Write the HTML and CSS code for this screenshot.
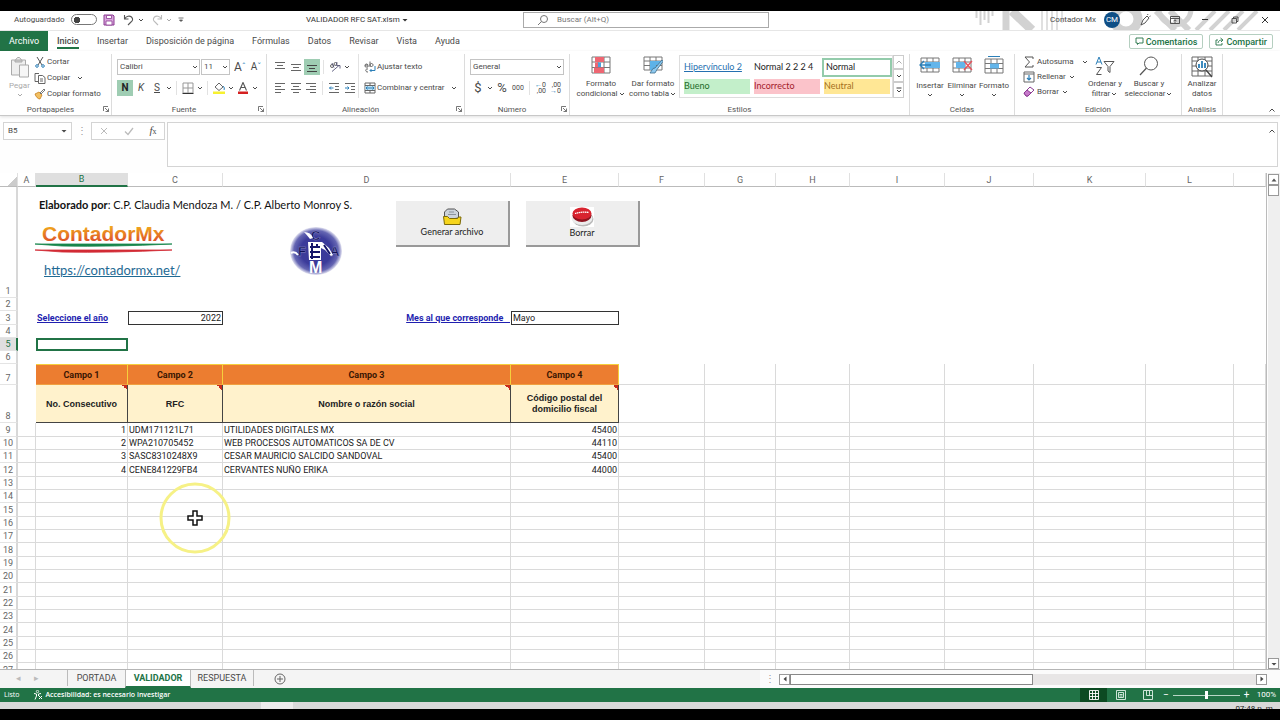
FILE: index.html
```
<!DOCTYPE html>
<html lang="es">
<head>
    <meta charset="UTF-8">
    <meta name="viewport" content="width=device-width, initial-scale=1.0">
    <title>VALIDADOR RFC SAT.xlsm</title>
    <link rel="stylesheet" href="styles.css">
</head>
<body>

    <!-- Símbolos repetidos -->
    <svg class="simbolos">
        <symbol id="chev" viewBox="0 0 8 8"><path d="M2 3l2 2 2-2" fill="none" stroke="currentColor"/></symbol>
        <symbol id="chev-up" viewBox="0 0 8 8"><path d="M1.500 5.500l2.500-2.500 2.500 2.500" fill="none" stroke="currentColor"/></symbol>
        <symbol id="flecha" viewBox="0 0 8 8"><path d="M1.500 3h5L4 5.500z" fill="currentColor"/></symbol>
        <symbol id="lanzar" viewBox="0 0 8 8"><path d="M1.500 6V1.500H6M3 3l3.500 3.500M6.500 3.500v3h-3" fill="none" stroke="currentColor" stroke-width=".8"/></symbol>
    </svg>

    <!-- Barra de título -->
    <header class="titulo">
        <svg class="adorno" viewBox="0 0 300 19">
            <g stroke="#d2d2d2" fill="none">
                <path d="M6.500 0v7M10.500 0v14M14.500 0v9M18.500 0v12M22.500 0v5" stroke-width="2"/>
                <path d="M36 0v19" stroke-width="7"/>
                <path d="M42 0l20 19" stroke-width="9"/>
                <path d="M72 0v19M77 0v19M82 0v19M87 0v19M92 0v12" stroke="#e0e0e0" stroke-width="2"/>
                <circle cx="156" cy="8" r="12" stroke-width="9"/>
                <path d="M186 0l19 19M200 0l19 19" stroke-width="6"/>
                <circle cx="205" cy="-2" r="16" stroke-width="5"/>
                <path d="M226 19l19-19M240 19l19-19M254 19l19-19M268 19l19-19" stroke-width="4"/>
            </g>
        </svg>
        <div class="titulo-izq">
            <label for="auto">Autoguardado</label>
            <input type="checkbox" id="auto" class="switch">
            <button class="ib" aria-label="Guardar"><svg width="12" height="12" viewBox="0 0 12 12"><path d="M1 1h9l1 1v9H1z" fill="#d9a5dc" stroke="#8b3a92"/><path d="M3.500 1.500h5v3h-5zM3 7h6v4H3z" fill="#fff" stroke="#8b3a92" stroke-width=".8"/></svg></button>
            <button class="ib" aria-label="Deshacer"><svg width="12" height="12" viewBox="0 0 12 12"><path d="M1.500 1v4h4M1.500 5c2-3 5-3.500 7-2 2 2 1 4-.5 5L5 11" fill="none" stroke="#555" stroke-width="1.100"/></svg></button>
            <svg class="ch"><use href="#chev"/></svg>
            <button class="ib gris" aria-label="Rehacer"><svg width="12" height="12" viewBox="0 0 12 12"><path d="M10.500 1v4h-4M10.500 5c-2-3-5-3.500-7-2-2 2-1 4 .5 5L7 11" fill="none" stroke="#bbb" stroke-width="1.100"/></svg></button>
            <svg class="ch gris"><use href="#chev"/></svg>
            <svg class="ch mas" viewBox="0 0 8 8"><path d="M1.500 2h5M2.500 4h3L4 5.500z" fill="#555" stroke="#555" stroke-width=".8"/></svg>
        </div>
        <div class="archivo-nombre">VALIDADOR RFC SAT.xlsm <svg class="ch"><use href="#flecha"/></svg></div>
        <div class="buscar">
            <svg width="12" height="12" viewBox="0 0 12 12"><circle cx="7" cy="5" r="3.500" fill="none" stroke="#777"/><path d="M4.500 7.500L1 11" stroke="#777"/></svg>
            <input type="text" aria-label="Buscar" placeholder="Buscar (Alt+Q)">
        </div>
        <div class="titulo-der">
            <span>Contador Mx</span>
            <span class="avatar">CM</span>
            <button class="win" aria-label="Dibujo"><svg width="12" height="12" viewBox="0 0 12 12"><path d="M2 11l2-5 4-4 2 2-4 5zM8.500 1l.5-1M10.500 2.500l1-.5" fill="#fff" stroke="#444" stroke-width=".9"/></svg></button>
            <button class="win" aria-label="Opciones de la cinta"><svg width="10" height="8" viewBox="0 0 10 8"><path d="M.5.500h9v7h-9zM.500 2.500h9M5 7V4M3.500 5L5 3.800 6.500 5" fill="none" stroke="#444" stroke-width=".9"/></svg></button>
            <button class="win" aria-label="Minimizar"><svg width="8" height="8" viewBox="0 0 8 8"><path d="M1 3.500h6" stroke="#333"/></svg></button>
            <button class="win" aria-label="Restaurar"><svg width="8" height="8" viewBox="0 0 8 8"><path d="M1 2.500h4.500V7H1zM2.500 2.500V1H7v4.500H5.500" fill="none" stroke="#444" stroke-width=".9"/></svg></button>
            <button class="win" aria-label="Cerrar"><svg width="8" height="8" viewBox="0 0 8 8"><path d="M1 1l6 6M7 1L1 7" stroke="#333"/></svg></button>
        </div>
    </header>

    <!-- Pestañas -->
    <nav class="pestanas">
        <a href="#" class="archivo">Archivo</a>
        <a href="#" class="activa">Inicio</a>
        <a href="#">Insertar</a>
        <a href="#">Disposición de página</a>
        <a href="#">Fórmulas</a>
        <a href="#">Datos</a>
        <a href="#">Revisar</a>
        <a href="#">Vista</a>
        <a href="#">Ayuda</a>
        <div class="acciones">
            <button><svg width="9" height="9" viewBox="0 0 9 9"><path d="M1 1h7v5H4L2.500 7.500V6H1z" fill="none" stroke="#217346" stroke-width=".9"/></svg>Comentarios</button>
            <button><svg width="9" height="9" viewBox="0 0 9 9"><path d="M3 3H1v5h6V6M3 6c0-2 2-3 4-3M5.500 1L8 3 6 5" fill="none" stroke="#217346" stroke-width=".9"/></svg>Compartir</button>
        </div>
    </nav>

    <!-- Cinta de opciones -->
    <section class="cinta">
        <div class="grupo portapapeles">
            <div class="cuerpo">
                <button class="grande gris">
                    <svg width="20" height="22" viewBox="0 0 20 22"><path d="M1.500 4h4l2-2.500h2L11.500 4h4v15h-14z" fill="#eee" stroke="#aaa"/><path d="M5 4h7v2H5z" fill="#ccc" stroke="#aaa"/><path d="M9.500 9h9v12h-9z" fill="#f6f6f6" stroke="#aaa"/></svg>
                    <span>Pegar</span>
                    <svg class="ch"><use href="#chev"/></svg>
                </button>
                <div class="lista">
                    <button class="linea"><svg class="ico" viewBox="0 0 12 12"><path d="M3 1l5 8M9 1L4 9" stroke="#555"/><circle cx="3" cy="10" r="1.300" fill="none" stroke="#2b7fb8"/><circle cx="9" cy="10" r="1.300" fill="none" stroke="#2b7fb8"/></svg>Cortar</button>
                    <button class="linea"><svg class="ico" viewBox="0 0 12 12"><path d="M5 1.500H1v8h3M4.500 3.500h4l2.500 2v6H4.500zM6 7h3M6 9h3" fill="none" stroke="#555" stroke-width=".9"/></svg>Copiar<svg class="ch separado"><use href="#chev"/></svg></button>
                    <button class="linea"><svg class="ico" viewBox="0 0 12 12"><path d="M1 6l4-2 3 3-2 4C4 11 2 9 1 6z" fill="#f2c063" stroke="#c77d1c" stroke-width=".8"/><path d="M6 5l4-4 1 1-4 4z" fill="#fff" stroke="#555" stroke-width=".8"/></svg>Copiar formato</button>
                </div>
            </div>
            <div class="pie">Portapapeles<svg class="ch"><use href="#lanzar"/></svg></div>
        </div>

        <div class="grupo fuente">
            <div class="cuerpo filas">
                <div class="fila">
                    <div class="combo combo-fuente"><select aria-label="Fuente"><option>Calibri</option></select><svg class="ch"><use href="#chev"/></svg></div>
                    <div class="combo combo-tam"><select aria-label="Tamaño"><option>11</option></select><svg class="ch"><use href="#chev"/></svg></div>
                    <button class="ib letra-g">A<sup>ˆ</sup></button>
                    <button class="ib letra-m">A<sup>ˇ</sup></button>
                </div>
                <div class="fila">
                    <button class="ib marcado"><b>N</b></button>
                    <button class="ib"><i>K</i></button>
                    <button class="ib"><u>S</u></button>
                    <svg class="ch"><use href="#chev"/></svg>
                    <span class="sep"></span>
                    <button class="ib" aria-label="Bordes"><svg class="ico" viewBox="0 0 12 12"><path d="M1 1h10v10H1zM6 1v10M1 6h10" fill="none" stroke="#999"/><path d="M.5 11.500h11" stroke="#333"/></svg></button>
                    <svg class="ch"><use href="#chev"/></svg>
                    <span class="sep"></span>
                    <button class="ib" aria-label="Color de relleno"><svg class="ico" viewBox="0 0 12 12"><path d="M2 5l4-4 4 4-4 3.500z" fill="#fff" stroke="#555" stroke-width=".9"/><path d="M10 4c1.500 1 1.500 3 1 4" fill="none" stroke="#2b7fb8"/><path d="M0 9.500h12V12H0z" fill="#f7f130"/></svg></button>
                    <svg class="ch"><use href="#chev"/></svg>
                    <button class="ib" aria-label="Color de fuente"><svg class="ico" viewBox="0 0 12 12"><path d="M2.500 8.500L6 .5l3.500 8M4 5.500h4" fill="none" stroke="#555" stroke-width="1.100"/><path d="M1 9.500h10V12H1z" fill="#d42020"/></svg></button>
                    <svg class="ch"><use href="#chev"/></svg>
                </div>
            </div>
            <div class="pie">Fuente<svg class="ch"><use href="#lanzar"/></svg></div>
        </div>

        <div class="grupo alineacion">
            <div class="cuerpo">
                <div class="filas al-izq">
                    <div class="fila">
                        <button class="ib" aria-label="Arriba"><svg class="ico" viewBox="0 0 12 12"><path d="M1 1.500h10M3 4.500h6M1 7.500h10" stroke="#666"/></svg></button>
                        <button class="ib" aria-label="Medio"><svg class="ico" viewBox="0 0 12 12"><path d="M1 3.500h10M3 6.500h6M1 9.500h10" stroke="#666"/></svg></button>
                        <button class="ib marcado" aria-label="Abajo"><svg class="ico" viewBox="0 0 12 12"><path d="M1 4.500h10M3 7.500h6M1 10.500h10" stroke="#444"/></svg></button>
                        <span class="sep"></span>
                        <button class="ib" aria-label="Orientación"><svg class="ico" viewBox="0 0 12 12"><circle cx="3" cy="5" r="1.500" fill="none" stroke="#555" stroke-width=".9"/><circle cx="6.500" cy="3" r="1.500" fill="none" stroke="#555" stroke-width=".9"/><path d="M5 6.500L3 2M7 4.500L8 1M3 10.500l7-6M7.500 4.500H11v3" fill="none" stroke="#557" stroke-width=".9"/></svg></button>
                        <svg class="ch"><use href="#chev"/></svg>
                    </div>
                    <div class="fila">
                        <button class="ib" aria-label="Izquierda"><svg class="ico" viewBox="0 0 12 12"><path d="M1 1.500h10M1 4.500h6M1 7.500h10M1 10.500h6" stroke="#666"/></svg></button>
                        <button class="ib" aria-label="Centro"><svg class="ico" viewBox="0 0 12 12"><path d="M1 1.500h10M3 4.500h6M1 7.500h10M3 10.500h6" stroke="#666"/></svg></button>
                        <button class="ib" aria-label="Derecha"><svg class="ico" viewBox="0 0 12 12"><path d="M1 1.500h10M5 4.500h6M1 7.500h10M5 10.500h6" stroke="#666"/></svg></button>
                        <span class="sep"></span>
                        <button class="ib" aria-label="Reducir sangría"><svg class="ico" viewBox="0 0 12 12"><path d="M1 1.500h10M7 4.500h4M7 7.500h4M1 10.500h10" stroke="#666"/><path d="M5.500 6h-4M3 4.500L1.500 6 3 7.500" fill="none" stroke="#2b7fb8"/></svg></button>
                        <button class="ib" aria-label="Aumentar sangría"><svg class="ico" viewBox="0 0 12 12"><path d="M1 1.500h10M7 4.500h4M7 7.500h4M1 10.500h10" stroke="#666"/><path d="M1 6h4M3.500 4.500L5 6 3.500 7.500" fill="none" stroke="#2b7fb8"/></svg></button>
                    </div>
                </div>
                <div class="filas al-der">
                    <div class="fila"><button class="linea"><svg class="ico" viewBox="0 0 12 12"><path d="M1 4.500c0-2 3-2 3 0v1.500H2c-1.500 0-1.500-2 0-2h2M6 .5V6M6 4c0-2 3-2 3 0s-3 2-3 0M4 8c-3-1-3 3.500 0 3" fill="none" stroke="#555" stroke-width=".9"/><path d="M11 5v4.500H6M7.500 8L6 9.500 7.500 11" fill="none" stroke="#2b7fb8"/></svg>Ajustar texto</button></div>
                    <div class="fila"><button class="linea"><svg class="ico" viewBox="0 0 12 12"><path d="M1 1h10v10H1zM1 3.500h10M1 8.500h10M6 1v2.500M6 8.500V11" fill="none" stroke="#666"/><path d="M1.500 4h9v4h-9z" fill="#bfe3f5"/><path d="M2 6h8M3.500 4.500L2 6l1.500 1.500M8.500 4.500L10 6 8.500 7.500" fill="none" stroke="#2b7fb8"/></svg>Combinar y centrar</button><svg class="ch separado"><use href="#chev"/></svg></div>
                </div>
            </div>
            <div class="pie">Alineación<svg class="ch"><use href="#lanzar"/></svg></div>
        </div>

        <div class="grupo numero">
            <div class="cuerpo filas">
                <div class="fila"><div class="combo combo-num"><select aria-label="Formato de número"><option>General</option></select><svg class="ch"><use href="#chev"/></svg></div></div>
                <div class="fila">
                    <button class="ib moneda">$</button>
                    <svg class="ch"><use href="#chev"/></svg>
                    <button class="ib moneda">%</button>
                    <button class="ib miles">000</button>
                    <span class="sep"></span>
                    <button class="ib decimal"><span><i>←</i>0</span><span>,00</span></button>
                    <button class="ib decimal"><span>,00</span><span><i>→</i>0</span></button>
                </div>
            </div>
            <div class="pie">Número<svg class="ch"><use href="#lanzar"/></svg></div>
        </div>

        <div class="grupo estilos">
            <div class="cuerpo">
                <button class="grande ancho">
                    <svg width="20" height="18" viewBox="0 0 20 18"><path d="M1 1h18v16H1zM1 6h18M1 11.500h18M7 1v16M13 1v16" fill="#fff" stroke="#777"/><path d="M4 1h9v5H4zM3 11.500h10V17H3z" fill="#ee6672"/><path d="M7 6.500h3V11H7z" fill="#4aa0dd"/><path d="M4 6.500h3V11H4z" fill="#ee6672"/></svg>
                    <span>Formato<br>condicional <svg class="ch"><use href="#chev"/></svg></span>
                </button>
                <button class="grande ancho">
                    <svg width="20" height="18" viewBox="0 0 20 18"><path d="M1 1h18v13H1zM1 5h18M1 9.500h18M7 1v13M13 1v13" fill="#fff" stroke="#777"/><path d="M7 5h6v9H7zM13 5h5v4h-5z" fill="#5db2e8"/><path d="M19 4l-7 8-2 .5-3 4.500h5l2-3.500 6-8z" fill="#8fcaf0" stroke="#3d6d8c" stroke-width=".8"/></svg>
                    <span>Dar formato<br>como tabla <svg class="ch"><use href="#chev"/></svg></span>
                </button>
                <div class="galeria">
                    <button class="est-link">Hipervínculo 2</button>
                    <button>Normal 2 2 2 4</button>
                    <button class="est-normal">Normal</button>
                    <button class="est-bueno">Bueno</button>
                    <button class="est-malo">Incorrecto</button>
                    <button class="est-neutral">Neutral</button>
                </div>
                <div class="galeria-nav">
                    <button class="gris" aria-label="Subir"><svg class="ch"><use href="#chev-up"/></svg></button>
                    <button aria-label="Bajar"><svg class="ch"><use href="#chev"/></svg></button>
                    <button aria-label="Más"><svg class="ch" viewBox="0 0 8 8"><path d="M1.500 2h5M2 4l2 2 2-2" fill="none" stroke="#444"/></svg></button>
                </div>
            </div>
            <div class="pie">Estilos</div>
        </div>

        <div class="grupo celdas">
            <div class="cuerpo">
                <button class="grande">
                    <svg width="22" height="18" viewBox="0 0 22 18"><path d="M2 2h18v14H2zM2 6h18M2 12h18M8 2v14M14 2v14" fill="#fff" stroke="#777"/><path d="M6 6h15v6H6z" fill="#63b5ea"/><path d="M12 9H1M5 5L1 9l4 4" fill="none" stroke="#2b7fb8" stroke-width="1.300"/></svg>
                    <span>Insertar</span>
                    <svg class="ch"><use href="#chev"/></svg>
                </button>
                <button class="grande">
                    <svg width="22" height="18" viewBox="0 0 22 18"><path d="M2 2h18v14H2zM2 6h18M2 12h18M8 2v14M14 2v14" fill="#fff" stroke="#777"/><path d="M5 6h9v6H5z" fill="#63b5ea"/><path d="M13 5l8 9M21 5l-8 9" stroke="#e8505b" stroke-width="1.300"/></svg>
                    <span>Eliminar</span>
                    <svg class="ch"><use href="#chev"/></svg>
                </button>
                <button class="grande">
                    <svg width="22" height="18" viewBox="0 0 22 18"><path d="M5 .5h12" stroke="#2b7fb8"/><path d="M2 3h18v14H2zM2 7.500h18M2 12.500h18M8 3v14M14 3v14" fill="#fff" stroke="#777"/><path d="M7 7.500h9v5H7z" fill="#63b5ea"/></svg>
                    <span>Formato</span>
                    <svg class="ch"><use href="#chev"/></svg>
                </button>
            </div>
            <div class="pie">Celdas</div>
        </div>

        <div class="grupo edicion">
            <div class="cuerpo">
                <div class="lista compacta">
                    <button class="linea"><svg class="ico" viewBox="0 0 12 12"><path d="M10 3V1H2l4.500 5L2 11h8V9" fill="none" stroke="#555"/></svg>Autosuma<svg class="ch separado"><use href="#chev"/></svg></button>
                    <button class="linea"><svg class="ico" viewBox="0 0 12 12"><path d="M1 1h10v10H1zM1 3h10" fill="#fff" stroke="#666"/><path d="M6 4v5M4 7l2 2 2-2" fill="none" stroke="#2b7fb8" stroke-width="1.200"/></svg>Rellenar<svg class="ch"><use href="#chev"/></svg></button>
                    <button class="linea"><svg class="ico" viewBox="0 0 12 12"><path d="M1 7l6-6 4 3-6 6H3z" fill="#fff" stroke="#8b3a92"/><path d="M1 7l3-3 4 3-3 3H3z" fill="#c77acb" stroke="#8b3a92"/></svg>Borrar<svg class="ch"><use href="#chev"/></svg></button>
                </div>
                <button class="grande orden">
                    <svg width="20" height="20" viewBox="0 0 20 20"><path d="M1 8.500L4 1l3 7.500M2 6h4" fill="none" stroke="#2b7fb8"/><path d="M1.500 11.500h5l-5 7h5" fill="none" stroke="#555"/><path d="M9 5.500h10l-4 5v6l-2-1.500v-4.500z" fill="#fff" stroke="#555"/></svg>
                    <span>Ordenar y<br>filtrar <svg class="ch"><use href="#chev"/></svg></span>
                </button>
                <button class="grande orden">
                    <svg width="20" height="20" viewBox="0 0 20 20"><circle cx="12" cy="7.500" r="6.500" fill="#fff" stroke="#555"/><path d="M7.500 12L1 19" stroke="#555" stroke-width="1.200"/></svg>
                    <span>Buscar y<br>seleccionar <svg class="ch"><use href="#chev"/></svg></span>
                </button>
            </div>
            <div class="pie">Edición</div>
        </div>

        <div class="grupo analisis">
            <div class="cuerpo">
                <button class="grande">
                    <svg width="22" height="22" viewBox="0 0 22 22"><path d="M1 1h20v19H1zM1 5h20M1 10h20M1 15h20M7 1v19M14 1v19" fill="#fff" stroke="#666"/><circle cx="11" cy="9" r="6" fill="#fff" stroke="#444"/><path d="M8 12V8M11 12V5M14 12V7" stroke="#2b7fb8" stroke-width="1.800"/><path d="M15 14l6 7" stroke="#444" stroke-width="1.400"/></svg>
                    <span>Analizar<br>datos</span>
                </button>
            </div>
            <div class="pie">Análisis</div>
        </div>
        <button class="contraer" aria-label="Contraer la cinta"><svg class="ch"><use href="#chev-up"/></svg></button>
    </section>

    <!-- Barra de fórmulas -->
    <section class="formulas">
        <div class="nombre"><input type="text" aria-label="Cuadro de nombres" value="B5"><svg class="ch"><use href="#flecha"/></svg></div>
        <span class="puntos">⋮</span>
        <div class="fx">
            <button aria-label="Cancelar"><svg width="10" height="10" viewBox="0 0 10 10"><path d="M2 2l6 6M8 2L2 8" stroke="#bbb"/></svg></button>
            <button aria-label="Aceptar"><svg width="10" height="10" viewBox="0 0 10 10"><path d="M1 5.500l3 3L9 2" fill="none" stroke="#bbb" stroke-width="1.300"/></svg></button>
            <button class="fx-btn"><i>f</i>x</button>
        </div>
        <div class="entrada"><textarea aria-label="Barra de fórmulas"></textarea><svg class="ch"><use href="#chev-up"/></svg></div>
    </section>

    <!-- Hoja -->
    <main class="hoja">
        <div class="lienzo" id="lienzo">
            <table id="tabla">
                <colgroup>
                    <col class="c-num"><col class="c-a"><col class="c-b"><col class="c-c"><col class="c-d"><col class="c-e"><col class="c-f"><col class="c-g"><col class="c-h"><col class="c-i"><col class="c-j"><col class="c-k"><col class="c-l"><col>
                </colgroup>
                <thead>
                    <tr><th class="esquina"></th><th>A</th><th class="sel">B</th><th>C</th><th>D</th><th>E</th><th>F</th><th>G</th><th>H</th><th>I</th><th>J</th><th>K</th><th>L</th><th></th></tr>
                </thead>
                <tbody class="portada">
                    <tr class="r-logo"><th>1</th><td colspan="13"></td></tr>
                    <tr><th>2</th><td colspan="13"></td></tr>
                    <tr class="r-14"><th>3</th><td></td><td class="aviso">Seleccione el año</td><td class="caja num">2022</td><td class="aviso der">Mes al que corresponde&nbsp;&nbsp;&nbsp;</td><td class="caja">Mayo</td><td colspan="8"></td></tr>
                    <tr><th>4</th><td colspan="13"></td></tr>
                    <tr><th class="sel">5</th><td></td><td class="cursor-celda"></td><td colspan="11"></td></tr>
                    <tr><th>6</th><td colspan="13"></td></tr>
                </tbody>
                <tbody class="datos">
                    <tr class="campos"><th>7</th><td class="libre"></td><td>Campo 1</td><td>Campo 2</td><td>Campo 3</td><td>Campo 4</td><td></td><td></td><td></td><td></td><td></td><td></td><td></td><td></td></tr>
                    <tr class="encabezado"><th>8</th><td class="libre"></td><td>No. Consecutivo</td><td>RFC</td><td>Nombre o razón social</td><td>Código postal del<br>domicilio fiscal</td><td></td><td></td><td></td><td></td><td></td><td></td><td></td><td></td></tr>
                </tbody>
                <tbody class="datos filas-datos" id="filas"></tbody>
            </table>

            <!-- Objetos sobre la hoja -->
            <p class="autor"><b>Elaborado por</b>: C.P. Claudia Mendoza M. / C.P. Alberto Monroy S.</p>
            <svg class="logo" width="142" height="34" viewBox="0 0 142 34">
                <defs><linearGradient id="naranja" x1="0" y1="0" x2="0" y2="1"><stop offset=".2" stop-color="#f0a81e"/><stop offset=".9" stop-color="#dc4a2c"/></linearGradient></defs>
                <text x="8" y="19" fill="url(#naranja)">ContadorMx</text>
                <path d="M1 22h137q-60 3-110 2z" fill="#16854b" stroke="#16854b" stroke-width=".8"/>
                <path d="M1 28h137q-60 3-110 2z" fill="#d22b35" stroke="#d22b35" stroke-width=".8"/>
            </svg>
            <a class="enlace" href="https://contadormx.net/">https://contadormx.net/</a>
            <svg class="sello" width="52" height="48" viewBox="0 0 52 48">
                <defs><radialGradient id="azul"><stop offset=".6" stop-color="#3b3b9a"/><stop offset=".85" stop-color="#6465b2"/><stop offset="1" stop-color="#e4e4f2"/></radialGradient></defs>
                <ellipse cx="26" cy="24" rx="26" ry="24" fill="url(#azul)"/>
                <g fill="#101055" stroke="#8f90c8" stroke-width=".4"><text x="21" y="13">C</text><text x="8" y="29">F</text><text x="40" y="29">A</text></g>
                <path d="M14 5q7 0 9 6l-3 1q-3-4-6-7z" fill="#fff"/>
                <path d="M18 15h14l7 6 4 7-2 1-6-6-4-2v12H19z" fill="#fff"/>
                <path d="M22 16v16M27 17v4M20 20h10M20 25h10M20 30h10M34 18l6 9" stroke="#151569" stroke-width="2"/>
                <path d="M1 26q4-2 7 2" stroke="#fff" stroke-width="2" fill="none"/>
                <text x="19" y="46" fill="#fff" class="eme">M</text>
            </svg>
            <button class="macro m1">
                <svg width="20" height="18" viewBox="0 0 20 18"><path d="M2.500 12V4l3-3h7l4 3v6z" fill="#ccd3dc" stroke="#555"/><path d="M7 4h5M6 6.500h8" stroke="#8a929c"/><path d="M1.500 8.500h4l2 2h8l1-1.500h2.500L18 16.500H2.500z" fill="#f6d51d" stroke="#7c6a08"/></svg>
                Generar archivo
            </button>
            <button class="macro m2">
                <svg width="24" height="20" viewBox="0 0 24 20"><path d="M0 0h24v20H0z" fill="#fff"/><ellipse cx="13" cy="12" rx="10.500" ry="7.500" fill="#b9b9b9"/><ellipse cx="12" cy="11" rx="10.500" ry="7" fill="#ececec"/><ellipse cx="12" cy="8.500" rx="9.500" ry="6.500" fill="#8e1420"/><ellipse cx="12" cy="6.500" rx="9.500" ry="6" fill="#d8232f"/><path d="M5 6.500q7-2 14-1" stroke="#fff" stroke-width="1.300" stroke-dasharray="1.500 .5" fill="none"/></svg>
                Borrar
            </button>
            <svg class="puntero" width="72" height="72" viewBox="0 0 72 72"><circle cx="36" cy="36" r="34" fill="none" stroke="#f6f186" stroke-width="3"/><path d="M34 29h4v5h5v4h-5v5h-4v-5h-5v-4h5z" fill="#fff" stroke="#111" stroke-width="1.500"/></svg>
        </div>
        <div class="barra-v">
            <button aria-label="Subir"><svg class="ch"><path d="M1.500 5.500h5L4 2.500z" fill="#555"/></svg></button>
            <span class="tope"></span>
            <button class="abajo" aria-label="Bajar"><svg class="ch"><use href="#flecha"/></svg></button>
        </div>
    </main>

    <!-- Hojas del libro -->
    <nav class="libro">
        <div class="flechas"><span>◂</span><span>▸</span></div>
        <a href="#">PORTADA</a>
        <a href="#" class="actual">VALIDADOR</a>
        <a href="#" class="ultima">RESPUESTA</a>
        <button class="nueva" aria-label="Hoja nueva"><svg width="12" height="12" viewBox="0 0 12 12"><circle cx="6" cy="6" r="5" fill="none" stroke="#666"/><path d="M6 3v6M3 6h6" stroke="#666"/></svg></button>
        <div class="zona-h">
            <span class="puntos">⋮</span>
            <div class="barra-h">
                <button aria-label="Izquierda"><svg class="ch"><path d="M5.500 1.500v5L2.500 4z" fill="#444"/></svg></button>
                <span class="tope"></span>
                <button class="fin" aria-label="Derecha"><svg class="ch"><path d="M2.500 1.500v5L5.500 4z" fill="#444"/></svg></button>
            </div>
        </div>
    </nav>

    <!-- Barra de estado -->
    <footer class="estado">
        <span>Listo</span>
        <span class="acces"><svg width="10" height="10" viewBox="0 0 10 10"><circle cx="4.500" cy="1.500" r="1.200" fill="none" stroke="#fff" stroke-width=".8"/><path d="M1 3.500l2.500.5v2L2 9.500M8 3.500L5.500 4v2M6 6l3 3M9 6L6 9" fill="none" stroke="#fff"/></svg>Accesibilidad: es necesario investigar</span>
        <div class="vistas">
            <button class="activa" aria-label="Normal"><svg width="10" height="10" viewBox="0 0 10 10"><path d="M.5.500h9v9h-9zM.500 3.500h9M.500 6.500h9M3.500.500v9M6.500.500v9" fill="none" stroke="#fff" stroke-width=".9"/></svg></button>
            <button aria-label="Diseño de página"><svg width="10" height="10" viewBox="0 0 10 10"><path d="M.5.500h9v9h-9zM2.500 2.500h5v5h-5zM3.500 4.500h3M3.500 6h3" fill="none" stroke="#dff0e6" stroke-width=".9"/></svg></button>
            <button aria-label="Saltos de página"><svg width="10" height="10" viewBox="0 0 10 10"><path d="M.5.500h9v9h-9zM3.500.500v5h6M6.500.500v5" fill="none" stroke="#dff0e6" stroke-width=".9"/></svg></button>
        </div>
        <div class="zoom">
            <span>−</span>
            <input type="range" aria-label="Zoom" min="0" max="100" value="50">
            <span>+</span>
            <span class="pct">100%</span>
        </div>
    </footer>

    <div class="tareas"><span class="app"></span><span class="hora">07:48 p. m.</span></div>

    <script>
        const registros = [
            [1, 'UDM171121L71', 'UTILIDADES DIGITALES MX', '45400'],
            [2, 'WPA210705452', 'WEB PROCESOS AUTOMATICOS SA DE CV', '44110'],
            [3, 'SASC8310248X9', 'CESAR MAURICIO SALCIDO SANDOVAL', '45400'],
            [4, 'CENE841229FB4', 'CERVANTES NUÑO ERIKA', '44000']
        ];
        const lienzo = document.getElementById('lienzo');
        const tabla = document.getElementById('tabla');
        const filas = document.getElementById('filas');

        // Agrega filas hasta llenar la hoja
        let fila = 9;
        while (tabla.offsetHeight < lienzo.clientHeight) {
            let r = registros[fila - 9] || ['', '', '', ''];
            filas.insertAdjacentHTML('beforeend', '<tr><th>' + fila + '</th><td></td><td class="num">' + r[0] + '</td><td>' + r[1] + '</td><td>' + r[2] + '</td><td class="num">' + r[3] + '</td>' + '<td></td>'.repeat(8) + '</tr>');
            fila++;
        }
    </script>

</body>
</html>
```
FILE: styles.css
```
/* Colores */
:root {
    --verde: #217346;
    --verde-claro: #9fcdb3;
    --texto: #4a4a4a;
    --linea: #dadada;
}

* {
    box-sizing: border-box;
}

body {
    margin: 0;
    height: 100vh;
    padding: 11px 0;
    display: flex;
    flex-direction: column;
    overflow: hidden;
    background: #000;
    color: var(--texto);
    font-family: Roboto, "Open Sans", sans-serif;
    font-size: 8px;
    line-height: 10px;
    white-space: nowrap;
}

button, input, select, textarea {
    font: inherit;
    color: inherit;
    background: none;
    border: none;
    border-radius: 0;
    margin: 0;
    padding: 0;
    outline: none;
}

a {
    color: inherit;
    text-decoration: none;
}

svg {
    flex: none;
}

.simbolos {
    position: absolute;
    width: 0;
    height: 0;
}

.ch {
    width: 8px;
    height: 8px;
}

.ico {
    width: 12px;
    height: 12px;
}

.gris {
    color: #aaa;
}

.ib {
    width: 16px;
    height: 16px;
    display: flex;
    align-items: center;
    justify-content: center;
    font-size: 10px;
}

/* Barra de título */
.titulo {
    position: relative;
    flex: none;
    height: 20px;
    display: flex;
    align-items: center;
    background: #fff;
    border-bottom: 1px solid #e6e6e6;
    padding-bottom: 2px;
}

.adorno {
    position: absolute;
    top: 0;
    right: 10px;
    width: 300px;
    height: 19px;
}

.titulo-izq {
    width: 306px;
    padding-left: 14px;
    display: flex;
    align-items: center;
    gap: 4px;
}

.titulo-izq label {
    width: 53px;
}

.titulo-izq .ch {
    margin-left: -4px;
}

.titulo-izq .mas {
    margin-left: 0;
}

.switch {
    appearance: none;
    width: 26px;
    height: 11px;
    border: 1px solid #777;
    border-radius: 6px;
    background: radial-gradient(circle at 5px 5px, #444 3px, transparent 3px);
}

.archivo-nombre {
    width: 217px;
    display: flex;
    align-items: center;
    gap: 1px;
    color: #333;
}

.buscar {
    width: 246px;
    height: 16px;
    display: flex;
    align-items: center;
    gap: 8px;
    padding-left: 13px;
    border: 1px solid #aaa;
}

.buscar input {
    flex: 1;
}

.buscar input::placeholder {
    color: #777;
}

.titulo-der {
    position: relative;
    margin-left: auto;
    display: flex;
    align-items: center;
}

.avatar {
    width: 16px;
    height: 16px;
    line-height: 16px;
    margin: 0 10px 0 8px;
    border-radius: 50%;
    background: #0f4f86;
    color: #fff;
    text-align: center;
}

.win {
    width: 30px;
    height: 16px;
    display: flex;
    align-items: center;
    justify-content: center;
}

/* Pestañas */
.pestanas {
    flex: none;
    height: 20px;
    display: flex;
    gap: 18px;
    background: #fff;
    font-size: 9px;
    line-height: 20px;
}

.pestanas .archivo {
    width: 48px;
    margin-right: -9px;
    background: var(--verde);
    color: #fff;
    text-align: center;
}

.pestanas .activa {
    font-weight: 500;
    height: 18px;
    border-bottom: 2px solid var(--verde);
}

.acciones {
    margin: 3px 7px 0 auto;
    display: flex;
    gap: 6px;
}

.acciones button {
    height: 15px;
    display: flex;
    align-items: center;
    gap: 2px;
    padding: 0 5px;
    border: 1px solid #b5cfc0;
    border-radius: 2px;
    color: var(--verde);
    font-weight: 500;
}

/* Cinta */
.cinta {
    position: relative;
    flex: none;
    height: 65px;
    display: flex;
    background: #fff;
    border-bottom: 1px solid #c8c8c8;
    box-shadow: 0 1px 3px rgba(0, 0, 0, 0.12);
}

.grupo {
    position: relative;
    display: flex;
    flex-direction: column;
    justify-content: space-between;
    margin-top: 3px;
    border-right: 1px solid #dcdcdc;
}

.cuerpo {
    display: flex;
}

.pie {
    position: relative;
    text-align: center;
    color: #555;
}

.pie .ch {
    position: absolute;
    right: 1px;
    top: 0;
}

.portapapeles { width: 112px; }
.fuente { width: 155px; }
.alineacion { width: 198px; }
.numero { width: 105px; }
.estilos { width: 340px; }
.celdas { width: 105px; }
.edicion { width: 167px; }
.analisis { width: 41px; }

.portapapeles .pie,
.fuente .pie,
.alineacion .pie,
.numero .pie {
    padding-right: 10px;
}

.filas {
    display: flex;
    flex-direction: column;
    padding-top: 2px;
}

.fila {
    display: flex;
    align-items: center;
    height: 21px;
}

.fuente .filas,
.numero .filas,
.al-izq {
    padding-left: 5px;
}

.al-izq {
    width: 92px;
    border-right: 1px solid #e2e2e2;
}

.al-der {
    padding-left: 5px;
}

.sep {
    width: 1px;
    height: 14px;
    margin: 0 3px;
    background: #e2e2e2;
}

.marcado {
    background: var(--verde-claro);
    color: #222;
}

.grande {
    display: flex;
    flex-direction: column;
    align-items: center;
    width: 32px;
    height: 45px;
    padding-top: 2px;
}

.grande > svg:first-child {
    margin-bottom: auto;
}

.grande span .ch {
    vertical-align: middle;
    margin-left: -2px;
}

.portapapeles .grande {
    margin-left: 5px;
    width: 29px;
}

.grande.ancho {
    width: 52px;
}

.grande.orden {
    width: 44px;
}

.lista {
    display: flex;
    flex-direction: column;
}

.linea {
    height: 16px;
    display: flex;
    align-items: center;
    gap: 1px;
}

.compacta .linea {
    height: 15px;
    gap: 2px;
}

.separado {
    margin-left: 5px;
}

.combo {
    position: relative;
    height: 16px;
    border: 1px solid #c4c4c4;
}

.combo select {
    appearance: none;
    width: 100%;
    height: 14px;
    padding-left: 2px;
}

.combo .ch {
    position: absolute;
    right: 0;
    top: 3px;
}

.combo-fuente {
    width: 83px;
}

.combo-tam {
    width: 29px;
    margin: 0 2px 0 1px;
}

.combo-num {
    width: 94px;
}

.letra-g {
    font-size: 12px;
}

.letra-m {
    font-size: 10px;
}

.letra-g sup,
.letra-m sup {
    font-size: 9px;
    line-height: 8px;
    color: #2b7fb8;
}

.moneda {
    font-size: 13px;
}

.miles {
    font-size: 7px;
}

.decimal {
    flex-direction: column;
    align-items: flex-end;
    font-size: 7px;
    line-height: 6px;
    width: 15px;
    padding-right: 2px;
}

.decimal span {
    height: 6px;
}

.decimal i {
    font-style: normal;
    color: #2b7fb8;
}

.estilos .cuerpo {
    padding-left: 5px;
}

.galeria {
    display: grid;
    grid-template-columns: repeat(3, 70px);
    grid-template-rows: 19px 17px;
    width: 214px;
    height: 43px;
    padding: 2px;
    border: 1px solid #ddd;
    margin-top: 1px;
    gap: 1px 0;
}

.galeria button {
    margin: 1px 2px;
    padding: 0 0 2px;
    text-align: left;
    font-family: Lato, "Open Sans", sans-serif;
    font-size: 9px;
    color: #222;
}

.galeria .est-link {
    color: #2570b0;
    text-decoration: underline;
}

.galeria .est-normal {
    margin: 0;
    padding-left: 2px;
    border: 2px solid #93cbab;
}

.galeria .est-bueno {
    background: #c3efca;
    color: #1c6b28;
}

.galeria .est-malo {
    background: #fbc3ca;
    color: #a3202b;
}

.galeria .est-neutral {
    background: #ffe795;
    color: #a5701c;
}

.galeria-nav {
    margin-top: 1px;
    height: 43px;
    display: grid;
    grid-template-rows: 14px 13px 16px;
}

.galeria-nav button {
    width: 11px;
    display: flex;
    align-items: center;
    justify-content: center;
    border: 1px solid #ccc;
}

.celdas .cuerpo {
    padding-left: 4px;
}

.edicion .lista {
    width: 61px;
    padding-left: 8px;
    margin-right: 7px;
}

.analisis .grande {
    width: 40px;
}

.contraer {
    margin: auto 4px 1px auto;
}

.contraer .ch {
    display: block;
}

/* Barra de fórmulas */
.formulas {
    flex: none;
    height: 57px;
    padding: 6px 2px 0 3px;
    display: flex;
    align-items: flex-start;
    background: #fefefe;
}

.nombre {
    width: 69px;
    height: 18px;
    display: flex;
    align-items: center;
    padding: 0 3px 0 4px;
    background: #fff;
    border: 1px solid #d4d4d4;
}

.nombre input {
    flex: 1;
    min-width: 0;
}

.puntos {
    width: 19px;
    line-height: 18px;
    text-align: center;
    font-size: 10px;
    color: #999;
}

.fx {
    width: 74px;
    height: 18px;
    display: flex;
    justify-content: space-around;
    align-items: center;
    background: #fff;
    border: 1px solid #d4d4d4;
    margin-right: 2px;
}

.fx svg {
    display: block;
}

.fx-btn {
    font-family: "Liberation Serif", serif;
    font-size: 8px;
}

.fx-btn i {
    font-size: 11px;
}

.entrada {
    position: relative;
    flex: 1;
    height: 45px;
    background: #fff;
    border: 1px solid #d4d4d4;
}

.entrada textarea {
    display: block;
    width: 100%;
    height: 100%;
    resize: none;
}

.entrada .ch {
    position: absolute;
    right: 1px;
    top: 4px;
}

/* Hoja */
.hoja {
    flex: 1;
    min-height: 0;
    display: flex;
    background: #fefefe;
}

.lienzo {
    position: relative;
    flex: 1;
    min-width: 0;
    overflow: hidden;
    background: #fff;
    border-right: 1px solid #bbb;
}

table {
    width: 100%;
    table-layout: fixed;
    border-collapse: separate;
    border-spacing: 0;
    color: #222;
    font-size: 9px;
    line-height: 11px;
}

.c-num { width: 18px; }
.c-a { width: 18px; }
.c-b { width: 92px; }
.c-c { width: 95px; }
.c-d { width: 288px; }
.c-e { width: 108px; }
.c-f { width: 86px; }
.c-g { width: 71px; }
.c-h { width: 74px; }
.c-i { width: 95px; }
.c-j { width: 89px; }
.c-k { width: 112px; }
.c-l { width: 88px; }

th, td {
    height: 13px;
    padding: 1px 1px 0;
    overflow: hidden;
}

th {
    font-weight: normal;
    color: #666;
    border-right: 1px solid #e0e0e0;
}

thead th {
    height: 14px;
    border-bottom: 1px solid #bbb;
}

thead .sel {
    padding-top: 0;
    background: #dfdfdf;
    color: var(--verde);
    border-bottom: 2px solid var(--verde);
}

.esquina {
    background: linear-gradient(135deg, transparent 70%, #ccc 70%);
}

tbody th {
    border-right: 2px solid #d8d8d8;
    border-bottom: 1px solid #e4e4e4;
    vertical-align: bottom;
}

tbody .sel {
    background: #dfdfdf;
    color: var(--verde);
    border-right-color: var(--verde);
}

.r-logo td {
    height: 111px;
}

.filas-datos td {
    vertical-align: bottom;
}

.r-14 td,
.filas-datos tr:nth-child(3n+1) td {
    height: 14px;
}

.aviso {
    color: #1f1fb0;
    font-weight: bold;
    text-decoration: underline;
}

.der,
.num {
    text-align: right;
}

.caja {
    border: 1px solid #333;
}

.cursor-celda {
    border: 2px solid var(--verde);
}

.datos td {
    border-right: 1px solid var(--linea);
    border-bottom: 1px solid var(--linea);
}

.datos .libre {
    border-color: transparent;
}

.campos td {
    height: 21px;
}

.encabezado td {
    height: 38px;
}

.campos td:nth-child(n+3):nth-child(-n+6),
.encabezado td:nth-child(n+3):nth-child(-n+6) {
    text-align: center;
    font-weight: bold;
}

.campos td:nth-child(n+3):nth-child(-n+6) {
    background: #ec7d30;
    color: #3a1703;
    border-top: 1px solid #f5cf3c;
    border-right-color: #f5cf3c;
    border-bottom-color: #f0a040;
}

.encabezado td:nth-child(n+3):nth-child(-n+6) {
    background: linear-gradient(45deg, transparent 50%, #c92a1c 50%) top right / 5px 5px no-repeat #fff2cc;
    font-family: "Liberation Sans", Arial, sans-serif;
    border-right-color: #444;
    border-bottom-color: #444;
}

/* Objetos flotantes */
.autor,
.logo,
.enlace,
.sello,
.macro,
.puntero {
    position: absolute;
}

.autor {
    left: 39px;
    top: 24px;
    margin: 0;
    line-height: 16px;
    font-family: Lato, sans-serif;
    font-size: 11px;
    color: #111;
}

.logo {
    left: 34px;
    top: 49px;
    font-family: "Liberation Sans", Arial, sans-serif;
    font-size: 21px;
    font-weight: bold;
}

.enlace {
    left: 44px;
    top: 89px;
    line-height: 16px;
    font-family: Lato, sans-serif;
    font-size: 13px;
    color: #1f6a94;
    text-decoration: underline;
}

.sello {
    left: 290px;
    top: 54px;
    font-family: "Liberation Sans", Arial, sans-serif;
    font-size: 13px;
    font-weight: bold;
}

.eme {
    font-size: 16px;
}

.macro {
    top: 28px;
    width: 114px;
    height: 46px;
    display: flex;
    flex-direction: column;
    align-items: center;
    justify-content: center;
    background: #eee;
    border-right: 2px solid #999;
    border-bottom: 2px solid #999;
    color: #222;
    font-family: Lato, sans-serif;
    font-size: 9px;
    line-height: 12px;
}

.m1 {
    left: 396px;
}

.m2 {
    left: 526px;
}

.puntero {
    left: 159px;
    top: 309px;
}

/* Barras de desplazamiento */
.barra-v {
    width: 12px;
    margin-left: 1px;
    padding-top: 1px;
    display: flex;
    flex-direction: column;
    background: #efefef;
}

.barra-v button,
.barra-h button {
    width: 11px;
    height: 11px;
    display: flex;
    align-items: center;
    justify-content: center;
    background: #fff;
    border: 1px solid #999;
}

.barra-v .tope {
    width: 11px;
    height: 11px;
    background: #fff;
    border: 1px solid #999;
}

.barra-v .abajo {
    margin-top: auto;
}

/* Pestañas del libro */
.libro {
    flex: none;
    height: 19px;
    display: flex;
    align-items: flex-start;
    background: #f4f4f4;
    border-top: 1px solid #b5b5b5;
    font-size: 9px;
    line-height: 16px;
}

.flechas {
    width: 67px;
    padding-left: 16px;
    display: flex;
    gap: 13px;
    color: #bbb;
}

.libro a {
    width: 58px;
    text-align: center;
    border-left: 1px solid #bbb;
}

.libro .actual {
    width: 66px;
    background: #fff;
    color: var(--verde);
    font-weight: bold;
    border-right: 1px solid #bbb;
    border-bottom: 2px solid var(--verde);
}

.libro .ultima {
    width: 63px;
    border-left: none;
    border-right: 1px solid #bbb;
}

.nueva {
    height: 17px;
    margin-left: 20px;
}

.nueva svg {
    display: block;
}

.zona-h {
    margin-left: auto;
    width: 520px;
    height: 18px;
    display: flex;
    align-items: center;
    background: #fbfbfb;
}

.barra-h {
    width: 488px;
    display: flex;
    background: #e8e6e6;
}

.barra-h .tope {
    width: 243px;
    background: #fff;
    border: 1px solid #888;
}

.barra-h .fin {
    margin-left: auto;
}

/* Barra de estado */
.estado {
    flex: none;
    height: 14px;
    display: flex;
    align-items: center;
    padding: 0 4px;
    background: var(--verde);
    color: #fff;
    font-family: "Open Sans", sans-serif;
    font-size: 7px;
}

.acces {
    margin-left: 14px;
    display: flex;
    align-items: center;
    gap: 2px;
    font-weight: 600;
}

.vistas {
    margin-left: auto;
    display: flex;
}

.vistas button {
    width: 27px;
    height: 14px;
    display: flex;
    align-items: center;
    justify-content: center;
}

.vistas .activa {
    background: #0c4a22;
}

.zoom {
    width: 115px;
    padding-left: 2px;
    display: flex;
    align-items: center;
    gap: 4px;
    font-family: Roboto, sans-serif;
    font-size: 10px;
}

.zoom input {
    appearance: none;
    width: 67px;
    height: 10px;
    background: linear-gradient(#b9d6c6, #b9d6c6) center / 100% 1px no-repeat;
}

.zoom input::-webkit-slider-thumb {
    appearance: none;
    width: 3px;
    height: 8px;
    background: #fff;
}

.pct {
    margin-left: auto;
    font-size: 8px;
}

/* Barra de tareas */
.tareas {
    flex: none;
    height: 7px;
    display: flex;
    overflow: hidden;
    background: #d8d9d9;
}

.app {
    width: 32px;
    margin-left: 261px;
    background: #ececec;
}

.hora {
    margin: 2px 5px 0 auto;
    color: #222;
}
```
